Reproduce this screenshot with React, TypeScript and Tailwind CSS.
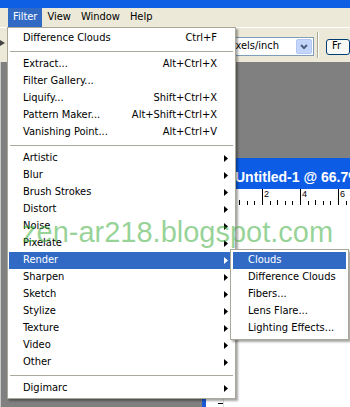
import React from 'react';

type Item = { label: string; shortcut?: string; sub?: boolean; active?: boolean } | 'sep';

// Filter menu entries, in order
const filterItems: Item[] = [
  { label: 'Difference Clouds', shortcut: 'Ctrl+F' },
  'sep',
  { label: 'Extract...', shortcut: 'Alt+Ctrl+X' },
  { label: 'Filter Gallery...' },
  { label: 'Liquify...', shortcut: 'Shift+Ctrl+X' },
  { label: 'Pattern Maker...', shortcut: 'Alt+Shift+Ctrl+X' },
  { label: 'Vanishing Point...', shortcut: 'Alt+Ctrl+V' },
  'sep',
  { label: 'Artistic', sub: true },
  { label: 'Blur', sub: true },
  { label: 'Brush Strokes', sub: true },
  { label: 'Distort', sub: true },
  { label: 'Noise', sub: true },
  { label: 'Pixelate', sub: true },
  { label: 'Render', sub: true, active: true },
  { label: 'Sharpen', sub: true },
  { label: 'Sketch', sub: true },
  { label: 'Stylize', sub: true },
  { label: 'Texture', sub: true },
  { label: 'Video', sub: true },
  { label: 'Other', sub: true },
  'sep',
  { label: 'Digimarc', sub: true },
];

const renderItems = ['Clouds', 'Difference Clouds', 'Fibers...', 'Lens Flare...', 'Lighting Effects...'];

function Arrow({ white }: { white?: boolean }) {
  return (
    <svg width="4" height="7" viewBox="0 0 4 7">
      <polygon points="0,0 4,3.5 0,7" fill={white ? '#fff' : '#000'} />
    </svg>
  );
}

function HRuler() {
  const ticks = [];
  for (let i = 0; i < 20; i++) {
    const x = Math.round(i * 7.6) + 0.5;
    const major = i % 5 === 0;
    ticks.push(<line key={i} x1={x} x2={x} y1={major ? 0 : i % 5 === 2 ? 11 : 12} y2={16} stroke="#000" strokeWidth="1" />);
  }
  return (
    <svg width="150" height="16" className="block">
      {ticks}
      <text x="40" y="8" fontSize="9" fontFamily="Liberation Sans, sans-serif">2</text>
      <text x="78" y="8" fontSize="9" fontFamily="Liberation Sans, sans-serif">4</text>
      <text x="116" y="8" fontSize="9" fontFamily="Liberation Sans, sans-serif">6</text>
    </svg>
  );
}

function VRuler() {
  const ticks = [];
  for (let i = 0; i < 30; i++) {
    const y = Math.round(i * 7.6) + 0.5;
    ticks.push(<line key={i} x1={i % 5 === 0 ? 4 : 12} x2={17} y1={y} y2={y} stroke="#000" strokeWidth="1" />);
  }
  return (
    <svg width="17" height="230" className="block">
      {ticks}
    </svg>
  );
}

export default function App() {
  return (
    <div className="relative w-[350px] h-[407px] overflow-hidden bg-[#808080] flex flex-col text-[11px] text-black font-['DejaVu_Sans_Condensed','Liberation_Sans',sans-serif]">
      {/* app title bar (cut off) */}
      <div className="h-[8px] shrink-0 bg-[#0f5fe4]" />

      {/* menu bar */}
      <div className="h-[19px] shrink-0 bg-[#ece9d8] flex pl-[8px]">
        <div className="px-[5px] flex items-center bg-[#316ac5] text-white">Filter</div>
        <div className="px-[5px] flex items-center">View</div>
        <div className="px-[5px] flex items-center">Window</div>
        <div className="px-[5px] flex items-center">Help</div>
      </div>

      {/* options bar */}
      <div className="h-[35px] shrink-0 bg-[#ece9d8] border-t border-white flex items-center">
        <div className="w-[170px] self-stretch pt-[12px]">
          <svg width="6" height="6" viewBox="0 0 6 6">
            <polygon points="0,0 5,3 0,6" fill="#444" />
          </svg>
        </div>
        <div className="mt-[3px] w-[151px] h-[19px] bg-white border border-[#7f9db9] flex items-center justify-between pl-[60px] pr-[1px]">
          <span>pixels/inch</span>
          <div className="w-[16px] h-[15px] rounded-[2px] bg-[#c4d5fb] border border-[#b3c7f3] flex items-center justify-center">
            <svg width="8" height="6" viewBox="0 0 8 6">
              <polyline points="1,1 4,4 7,1" fill="none" stroke="#4d6185" strokeWidth="2" />
            </svg>
          </div>
        </div>
        <div className="ml-[3px] w-[2px] h-[26px] border-l border-[#aca899] border-r border-r-white" />
        <div className="ml-[7px] mt-[3px] h-[16px] pl-[5px] pr-[8px] rounded-[3px] border border-[#003c74] bg-[#f8f8f4] flex items-center">
          Fr
        </div>
      </div>

      {/* workspace with document window */}
      <div className="flex-1 flex min-h-0">
        <div className="w-[7px] border-r border-[#c8c8c8]" />
        <div className="ml-[201px] mt-[96px] flex-1 flex flex-col border-l-[4px] border-[#1c5bd8] bg-white">
          <div className="h-[31px] shrink-0 -ml-[4px] pl-[33px] pt-[8px] flex items-center bg-[#0c5ce6] text-white text-[14px] font-bold whitespace-nowrap font-['Liberation_Sans',sans-serif]">
            Untitled-1 @ 66.7%
          </div>
          <div className="flex-1 flex">
            <div className="w-[18px] pt-[16px] border-r border-[#e0e0e0]">
              <VRuler />
            </div>
            <div className="flex-1 flex flex-col">
              <HRuler />
              <div className="flex-1 bg-white" />
            </div>
          </div>
        </div>
      </div>

      {/* Filter dropdown */}
      <div className="absolute left-[7px] top-[27px] w-[229px] bg-white border border-[#aca899] px-[1px] pt-[2px] pb-[1px] shadow-[2px_2px_2px_rgba(0,0,0,0.35)]">
        {filterItems.map((it, i) =>
          it === 'sep' ? (
            <div key={i} className="h-[9px] flex items-center px-[1px]">
              <div className="h-px w-full bg-[#aca899]" />
            </div>
          ) : (
            <div
              key={i}
              className={`h-[17px] flex items-center justify-between pl-[14px] ${it.sub ? 'pr-[6px]' : 'pr-[17px]'} ${
                it.active ? 'bg-[#316ac5] text-white' : ''
              }`}
            >
              <span>{it.label}</span>
              {it.shortcut && <span>{it.shortcut}</span>}
              {it.sub && <Arrow white={it.active} />}
            </div>
          )
        )}
      </div>

      {/* Render submenu */}
      <div className="absolute left-[230px] top-[249px] w-[119px] bg-white border border-[#aca899] p-[2px] shadow-[2px_2px_2px_rgba(0,0,0,0.35)]">
        {renderItems.map((label, i) => (
          <div key={label} className={`h-[17px] flex items-center pl-[15px] ${i === 0 ? 'bg-[#316ac5] text-white' : ''}`}>
            {label}
          </div>
        ))}
      </div>

      {/* watermark */}
      <div className="absolute left-[22px] top-[218px] text-[29px] leading-none whitespace-nowrap pointer-events-none text-[#30a830]/50 font-['Liberation_Sans',sans-serif]">
        zen-ar218.blogspot.com
      </div>
    </div>
  );
}
